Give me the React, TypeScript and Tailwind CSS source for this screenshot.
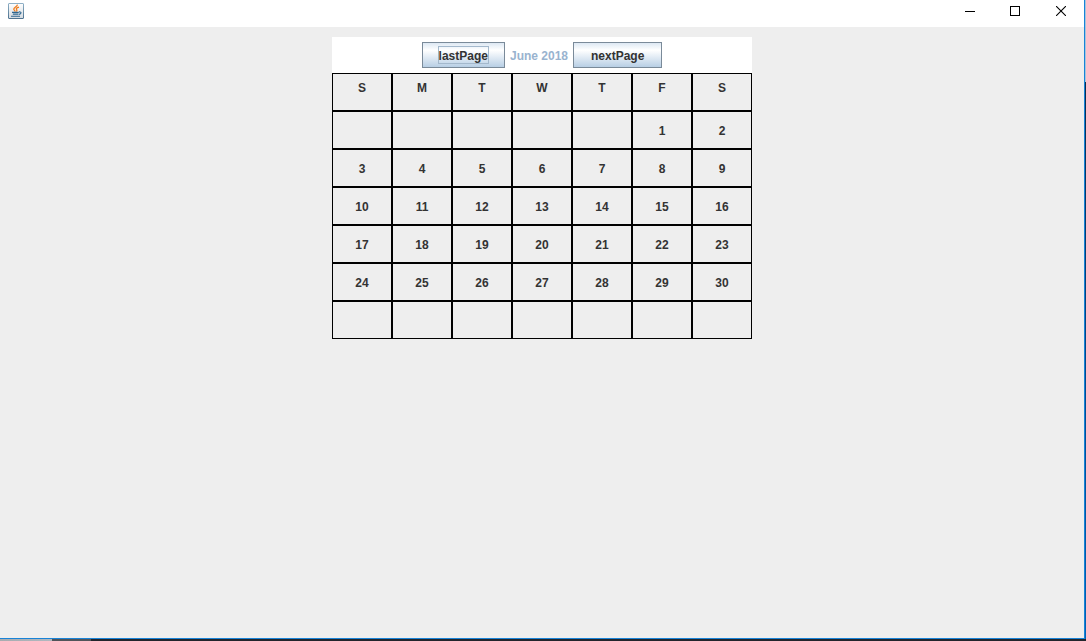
import React from "react";

const weekdays = ["S", "M", "T", "W", "T", "F", "S"];
const firstWeekday = 5;
const daysInMonth = 30;

const weeks = Array.from({ length: 6 }, (_, week) =>
  Array.from({ length: 7 }, (_, weekday) => {
    const day = week * 7 + weekday - firstWeekday + 1;
    return day >= 1 && day <= daysInMonth ? String(day) : "";
  }),
);

function JavaIcon() {
  return (
    <svg width="16" height="16" viewBox="0 0 16 16" aria-hidden="true">
      <defs>
        <linearGradient id="tile" x1="0" y1="0" x2="0" y2="1">
          <stop offset="0" stopColor="#ffffff" />
          <stop offset="1" stopColor="#d3dae0" />
        </linearGradient>
        <linearGradient id="edge" x1="0" y1="0" x2="0" y2="1">
          <stop offset="0" stopColor="#8fb0c6" />
          <stop offset="1" stopColor="#4f7390" />
        </linearGradient>
      </defs>
      <rect x="0.5" y="0.5" width="15" height="15" rx="0.5" fill="url(#tile)" stroke="url(#edge)" />
      <path d="M9.3 1.6C9.8 3.6 5.6 4.4 5.8 6.2C5.9 7.2 7 7.6 7.2 8.6M11 4.2C8.6 4.8 7.8 5.6 8.6 6.5C9.3 7.2 9 7.8 8.4 8.5" fill="none" stroke="#f07c1c" strokeWidth="1.3" />
      <path d="M4 9.4H10.8M4.8 11.1H10.4M3 13.3H12M11 8.9C14 8.6 13.4 11 10.9 11.4" fill="none" stroke="#2f668f" strokeWidth="1.1" />
    </svg>
  );
}

function TitleBar() {
  return (
    <header className="flex h-[27px] shrink-0 items-start justify-between bg-white">
      <div className="pl-2 pt-[3px]">
        <JavaIcon />
      </div>
      <div className="flex">
        <button type="button" aria-label="Minimize" className="flex h-[22px] w-[45px] items-center justify-center">
          <svg width="10" height="10" viewBox="0 0 10 10" shapeRendering="crispEdges">
            <rect y="5" width="10" height="1" fill="#000" />
          </svg>
        </button>
        <button type="button" aria-label="Maximize" className="flex h-[22px] w-[46px] items-center justify-center">
          <svg width="10" height="10" viewBox="0 0 10 10">
            <rect x="0.5" y="0.5" width="9" height="9" fill="none" stroke="#000" />
          </svg>
        </button>
        <button type="button" aria-label="Close" className="flex h-[22px] w-[46px] items-center justify-center">
          <svg width="10" height="10" viewBox="0 0 10 10">
            <path d="M0 0L10 10M10 0L0 10" stroke="#000" strokeWidth="1.1" />
          </svg>
        </button>
      </div>
    </header>
  );
}

function PageButton({ label, focused = false }: { label: string; focused?: boolean }) {
  return (
    <button
      type="button"
      className="flex h-[26px] items-center border border-[#7a8a99] bg-[linear-gradient(to_bottom,#dde8f3_0%,#ffffff_30%,#b8cfe5_100%)] px-[15px] text-[#333333]"
    >
      <span
        className={
          focused
            ? "border border-[#a3b8cc] pt-[2px] leading-[14px]"
            : "border border-transparent px-px pt-[2px] leading-[14px]"
        }
      >
        {label}
      </span>
    </button>
  );
}

export default function App() {
  return (
    <div className="flex h-screen flex-col font-['Liberation_Sans',Arial,sans-serif] text-[12px] font-bold leading-4 text-[#333333]">
      <div className="flex min-h-0 flex-1">
        <div className="flex flex-1 flex-col border-b border-r border-[#1883d7] bg-[#eeeeee]">
          <TitleBar />
          <main className="flex flex-1 flex-col items-center pt-[10px]">
            <div className="flex w-[420px] items-start justify-center gap-[5px] bg-white pb-[5px] pt-[5px]">
              <PageButton label="lastPage" focused />
              <h1 className="self-center pt-[2px] text-[#99b3cf]">June 2018</h1>
              <PageButton label="nextPage" />
            </div>
            <table className="w-[420px] table-fixed border-separate border-spacing-0 text-center">
              <thead>
                <tr className="h-[38px]">
                  {weekdays.map((name, i) => (
                    <th key={i} className="border border-black p-0 pt-[6px] align-top">
                      {name}
                    </th>
                  ))}
                </tr>
              </thead>
              <tbody>
                {weeks.map((week, i) => (
                  <tr key={i} className="h-[38px]">
                    {week.map((day, j) => (
                      <td key={j} className="border border-black p-0 pt-[2px] align-middle">
                        {day}
                      </td>
                    ))}
                  </tr>
                ))}
              </tbody>
            </table>
          </main>
        </div>
        <div className="w-px bg-[linear-gradient(to_bottom,#a9c4dc_0px,#a9c4dc_82px,#0a2c50_82px,#004a90_60%,#0063b8_100%)]" />
      </div>
      <div className="h-[2px] shrink-0 bg-[linear-gradient(to_right,#a8acb0_0px,#b0b8c0_52px,#50545a_52px,#50545a_91px,#22252c_91px)]" />
    </div>
  );
}
